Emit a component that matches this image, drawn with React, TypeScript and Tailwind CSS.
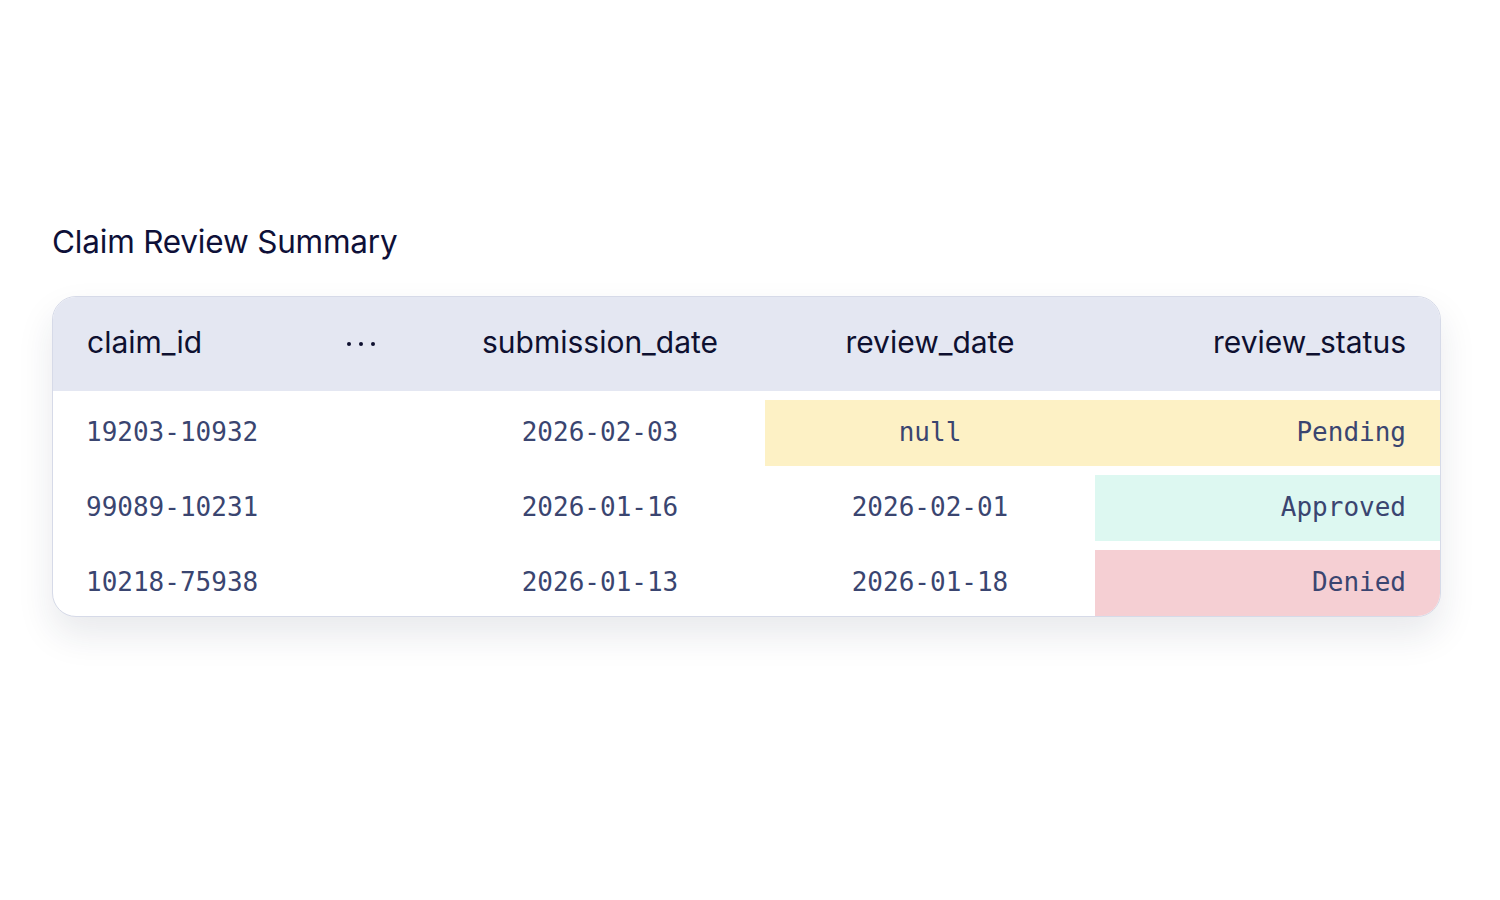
const rows = [
  { id: "19203-10932", submitted: "2026-02-03", reviewed: "null", status: "Pending", tone: "pending" },
  { id: "99089-10231", submitted: "2026-01-16", reviewed: "2026-02-01", status: "Approved", tone: "approved" },
  { id: "10218-75938", submitted: "2026-01-13", reviewed: "2026-01-18", status: "Denied", tone: "denied" },
];

const cols = "grid grid-cols-[235px_147px_330px_330px_1fr]";

function Row({ r }: { r: (typeof rows)[number] }) {
  const pending = r.tone === "pending";
  const statusBg = r.tone === "approved" ? "bg-[#ddf8f1]" : r.tone === "denied" ? "bg-[#f5cfd3]" : "";
  return (
    <div className={`${cols} h-[66px] items-stretch text-[26px] leading-[30px] text-[#3a4570] font-['DejaVu_Sans_Mono',monospace]`}>
      <div className="flex items-center pl-[33px] pb-[2px]">{r.id}</div>
      <div />
      <div className="flex items-center justify-center pb-[2px]">{r.submitted}</div>
      <div className={`flex items-center justify-center pb-[2px] ${pending ? "bg-[#fdf1c5]" : ""}`}>{r.reviewed}</div>
      <div className={`flex items-center justify-end pr-[34px] pb-[2px] ${pending ? "bg-[#fdf1c5]" : statusBg}`}>{r.status}</div>
    </div>
  );
}

export default function App() {
  return (
    <div className="min-h-[900px] w-[1500px] bg-white pt-[222px] pl-[52px] font-['Inter',sans-serif]">
      <h1 className="text-[31.5px] leading-[40px] text-[#0e1038] tracking-[-0.2px]">Claim Review Summary</h1>
      <div className="mt-[34px] w-[1389px] overflow-hidden rounded-[24px] border border-[#d6dae8] bg-white shadow-[0_18px_36px_rgba(30,35,70,0.10)]">
        <div className={`${cols} h-[94px] items-center bg-[#e4e7f2] text-[30px] leading-[36px] text-[#0e1030]`}>
          <div className="pl-[34px] pb-[4px]">claim_id</div>
          <div className="flex justify-center gap-[8px] pr-[2px]">
            <span className="h-[4px] w-[4px] rounded-full bg-[#0e1030]" />
            <span className="h-[4px] w-[4px] rounded-full bg-[#0e1030]" />
            <span className="h-[4px] w-[4px] rounded-full bg-[#0e1030]" />
          </div>
          <div className="text-center pb-[4px]">submission_date</div>
          <div className="text-center pb-[4px]">review_date</div>
          <div className="pr-[34px] pb-[4px] text-right">review_status</div>
        </div>
        <div className="flex flex-col gap-[9px] pt-[9px]">
          {rows.map((r) => (
            <Row key={r.id} r={r} />
          ))}
        </div>
      </div>
    </div>
  );
}
